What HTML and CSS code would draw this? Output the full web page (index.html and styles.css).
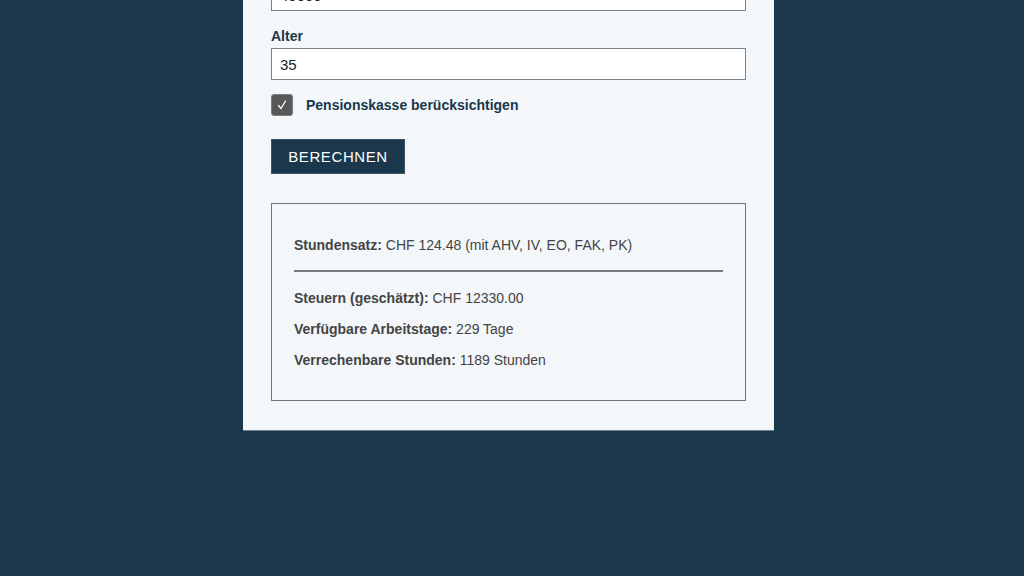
FILE: index.html
```html
<!DOCTYPE html>
<html lang="de">
<head>
<meta charset="utf-8">
<title>Stundensatz-Rechner</title>
<link rel="stylesheet" href="styles.css">
</head>
<body>
<main class="card">
  <div class="field">
    <label class="label" for="income">Einkommen</label>
    <input class="input" id="income" type="text" value="40000">
  </div>
  <div class="field">
    <label class="label" for="age">Alter</label>
    <input class="input" id="age" type="text" value="35">
  </div>
  <label class="check-row">
    <span class="checkbox"><svg width="12" height="12" viewBox="0 0 12 12"><path d="M2.5 6.5 L5 9.5 L9.5 2" fill="none" stroke="#fff" stroke-width="1.3" stroke-linecap="round" stroke-linejoin="round"/></svg></span>
    <span class="check-label">Pensionskasse berücksichtigen</span>
  </label>
  <button class="btn" type="button">BERECHNEN</button>
  <section class="result">
    <p><strong>Stundensatz:</strong> CHF 124.48 (mit AHV, IV, EO, FAK, PK)</p>
    <hr class="sep">
    <p><strong>Steuern (geschätzt):</strong> CHF 12330.00</p>
    <p><strong>Verfügbare Arbeitstage:</strong> 229 Tage</p>
    <p><strong>Verrechenbare Stunden:</strong> 1189 Stunden</p>
  </section>
</main>
</body>
</html>
```

FILE: styles.css
```css
html, body {
  margin: 0;
  padding: 0;
}
body {
  background: #1a374b;
  font-family: "Liberation Sans", Arial, sans-serif;
  height: 576px;
  overflow: hidden;
  display: flex;
  justify-content: center;
  align-items: flex-start;
  padding-right: 7px;
  box-sizing: border-box;
}
.card {
  width: 531px;
  box-sizing: border-box;
  background: #f3f7fa;
  margin-top: -42px;
  padding: 0 28px 29px;
  border-bottom: 1px solid #6d8190;
}
.field {
  margin-bottom: 16px;
}
.label {
  display: block;
  font-size: 14px;
  font-weight: bold;
  line-height: 18px;
  color: #1a374b;
  margin-bottom: 3px;
}
.input {
  display: block;
  width: 100%;
  box-sizing: border-box;
  height: 32px;
  border: 1px solid #76828c;
  background: #fff;
  padding: 0 8px;
  font-family: "Liberation Sans", Arial, sans-serif;
  font-size: 15px;
  color: #222;
  outline: none;
}
.check-row {
  display: flex;
  align-items: center;
  gap: 13px;
  margin-top: -2px;
}
.checkbox {
  width: 22px;
  height: 22px;
  box-sizing: border-box;
  background: #585858;
  border: 1px solid #7a7a7a;
  border-radius: 3px;
  display: flex;
  align-items: center;
  justify-content: center;
}
.check-label {
  font-size: 14px;
  font-weight: bold;
  color: #1a374b;
}
.btn {
  display: block;
  margin-top: 23px;
  height: 35px;
  width: 134px;
  background: #1a374b;
  color: #fff;
  border: 1px solid #3b5566;
  font-family: "Liberation Sans", Arial, sans-serif;
  font-size: 15px;
  letter-spacing: 0.6px;
  padding: 0;
}
.result {
  margin-top: 29px;
  border: 1px solid #6b7781;
  padding: 19px 22px 17px;
  color: #444;
  font-size: 14px;
  line-height: 17px;
}
.result p {
  margin: 14px 0;
}
.result strong {
  color: #444;
}
.sep {
  border: 0;
  height: 2px;
  background: #7a7a7a;
  margin: 16px 0 18px;
}
```
